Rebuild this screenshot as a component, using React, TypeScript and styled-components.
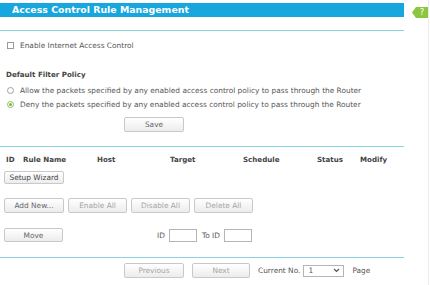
import React from "react";
import styled, { createGlobalStyle, css } from "styled-components";

const Global = createGlobalStyle`
  html, body { margin: 0; padding: 0; background: #fff; }
  body { font-family: "DejaVu Sans", Verdana, sans-serif; color: #555; }
  * { box-sizing: border-box; }
`;

const Page = styled.div`
  display: flex;
  width: 429px;
  height: 285px;
  border-right: 1px solid #ececec;
`;

const Main = styled.div`
  width: 405px;
  display: flex;
  flex-direction: column;
`;

const TitleBar = styled.div`
  margin-top: 3px;
  height: 14px;
  background: #17a6dd;
  color: #fff;
  font-weight: bold;
  font-size: 9.4px;
  line-height: 14px;
  padding-left: 12px;
  white-space: nowrap;
`;

const Rule = styled.div<{ $top: number }>`
  margin-top: ${(p) => p.$top}px;
  height: 1px;
  background: #8ad2e6;
`;

const Row = styled.div<{ $top: number; $h?: number; $left?: number }>`
  display: flex;
  align-items: center;
  margin-top: ${(p) => p.$top}px;
  height: ${(p) => p.$h ?? 12}px;
  padding-left: ${(p) => p.$left ?? 0}px;
  font-size: 7.4px;
  white-space: nowrap;
`;

const Check = styled.span`
  width: 7px;
  height: 7px;
  border: 1px solid #9a9a9a;
  background: #fff;
  margin-left: 7px;
  margin-right: 6px;
`;

const Radio = styled.span<{ $on?: boolean }>`
  position: relative;
  width: 7px;
  height: 7px;
  border-radius: 50%;
  border: 1px solid ${(p) => (p.$on ? "#8fbf5a" : "#a0a0a0")};
  background: #fff;
  margin-left: 7px;
  margin-right: 6px;
  ${(p) =>
    p.$on &&
    css`
      &::after {
        content: "";
        position: absolute;
        left: 1px;
        top: 1px;
        width: 3px;
        height: 3px;
        border-radius: 50%;
        background: #7cb342;
      }
    `}
`;

const Label = styled.span<{ $left?: number }>`
  margin-left: ${(p) => p.$left ?? 0}px;
  color: #555;
`;

const Heading = styled.div<{ $top: number }>`
  margin-top: ${(p) => p.$top}px;
  height: 10px;
  line-height: 10px;
  padding-left: 6px;
  font-size: 7.1px;
  font-weight: bold;
  color: #444;
  white-space: nowrap;
`;

const Header = styled.div`
  display: grid;
  grid-template-columns: 17px 74px 73px 73px 74px 43px auto;
  margin-top: 6px;
  height: 12px;
  align-items: center;
  padding-left: 6px;
  font-size: 7.1px;
  font-weight: bold;
  color: #444;
  white-space: nowrap;
`;

const Button = styled.button<{ $w: number; $h?: number; $dim?: boolean; $dark?: boolean }>`
  width: ${(p) => p.$w}px;
  height: ${(p) => p.$h ?? 15}px;
  padding: 0;
  border: 1px solid #c9c9c9;
  border-radius: 2px;
  background: linear-gradient(#ffffff, #ececec);
  font-family: "DejaVu Sans", Verdana, sans-serif;
  font-size: 7.4px;
  color: ${(p) => (p.$dim ? "#a5a5a5" : p.$dark ? "#444" : "#666")};
  flex: none;
`;

const Bar = styled.div<{ $top: number; $left?: number; $gap?: number }>`
  display: flex;
  align-items: center;
  margin-top: ${(p) => p.$top}px;
  padding-left: ${(p) => p.$left ?? 4}px;
  gap: ${(p) => p.$gap ?? 4}px;
  font-size: 7.4px;
  white-space: nowrap;
`;

const Field = styled.span`
  width: 28px;
  height: 13px;
  border: 1px solid #b5b5b5;
  background: #fff;
  flex: none;
`;

const Select = styled.span`
  display: flex;
  align-items: center;
  justify-content: space-between;
  width: 41px;
  height: 12px;
  border: 1px solid #b5b5b5;
  background: #fff;
  padding: 0 3px 0 4px;
  font-size: 7.4px;
  color: #555;
  flex: none;
`;

const HelpWrap = styled.div`
  margin-top: 7px;
  margin-left: 8px;
  width: 16px;
  height: 11px;
  position: relative;
`;

const HelpMark = styled.span`
  position: absolute;
  left: 5px;
  top: 0;
  width: 10px;
  line-height: 11px;
  text-align: center;
  color: #fff;
  font-size: 8.5px;
  font-family: "DejaVu Sans", sans-serif;
`;

export default function App() {
  return (
    <>
      <Global />
      <Page>
        <Main>
          <TitleBar>Access Control Rule Management</TitleBar>
          <Rule $top={13} />
          <Row $top={8}>
            <Check />
            <Label>Enable Internet Access Control</Label>
          </Row>
          <Heading $top={19}>Default Filter Policy</Heading>
          <Row $top={4}>
            <Radio />
            <Label>Allow the packets specified by any enabled access control policy to pass through the Router</Label>
          </Row>
          <Row $top={2}>
            <Radio $on />
            <Label>Deny the packets specified by any enabled access control policy to pass through the Router</Label>
          </Row>
          <Bar $top={7} $left={124}>
            <Button $w={60}>Save</Button>
          </Bar>
          <Rule $top={14} />
          <Header>
            <span>ID</span>
            <span>Rule Name</span>
            <span>Host</span>
            <span>Target</span>
            <span>Schedule</span>
            <span>Status</span>
            <span>Modify</span>
          </Header>
          <Bar $top={6}>
            <Button $w={60} $h={13} $dark>Setup Wizard</Button>
          </Bar>
          <Bar $top={14}>
            <Button $w={60}>Add New...</Button>
            <Button $w={59} $dim>Enable All</Button>
            <Button $w={59} $dim>Disable All</Button>
            <Button $w={59} $dim>Delete All</Button>
          </Bar>
          <Bar $top={15} $gap={0}>
            <Button $w={59} $h={14}>Move</Button>
            <Label $left={94}>ID</Label>
            <span style={{ width: 4 }} />
            <Field />
            <Label $left={5}>To ID</Label>
            <span style={{ width: 4 }} />
            <Field />
          </Bar>
          <Rule $top={15} />
          <Bar $top={5} $left={124} $gap={0}>
            <Button $w={60} $dim>Previous</Button>
            <span style={{ width: 8 }} />
            <Button $w={58} $dim>Next</Button>
            <Label $left={8}>Current No.</Label>
            <span style={{ width: 3 }} />
            <Select>
              <span>1</span>
              <svg width="7" height="5" viewBox="0 0 7 5">
                <path d="M1 1 L3.5 3.5 L6 1" fill="none" stroke="#555" strokeWidth="1.2" />
              </svg>
            </Select>
            <Label $left={8}>Page</Label>
          </Bar>
        </Main>
        <HelpWrap>
          <svg width="16" height="11" viewBox="0 0 16 11" style={{ position: "absolute", left: 0, top: 0 }}>
            <polygon points="0,5.5 4,0 16,0 16,11 4,11" fill="#8cc63f" />
          </svg>
          <HelpMark>?</HelpMark>
        </HelpWrap>
      </Page>
    </>
  );
}
